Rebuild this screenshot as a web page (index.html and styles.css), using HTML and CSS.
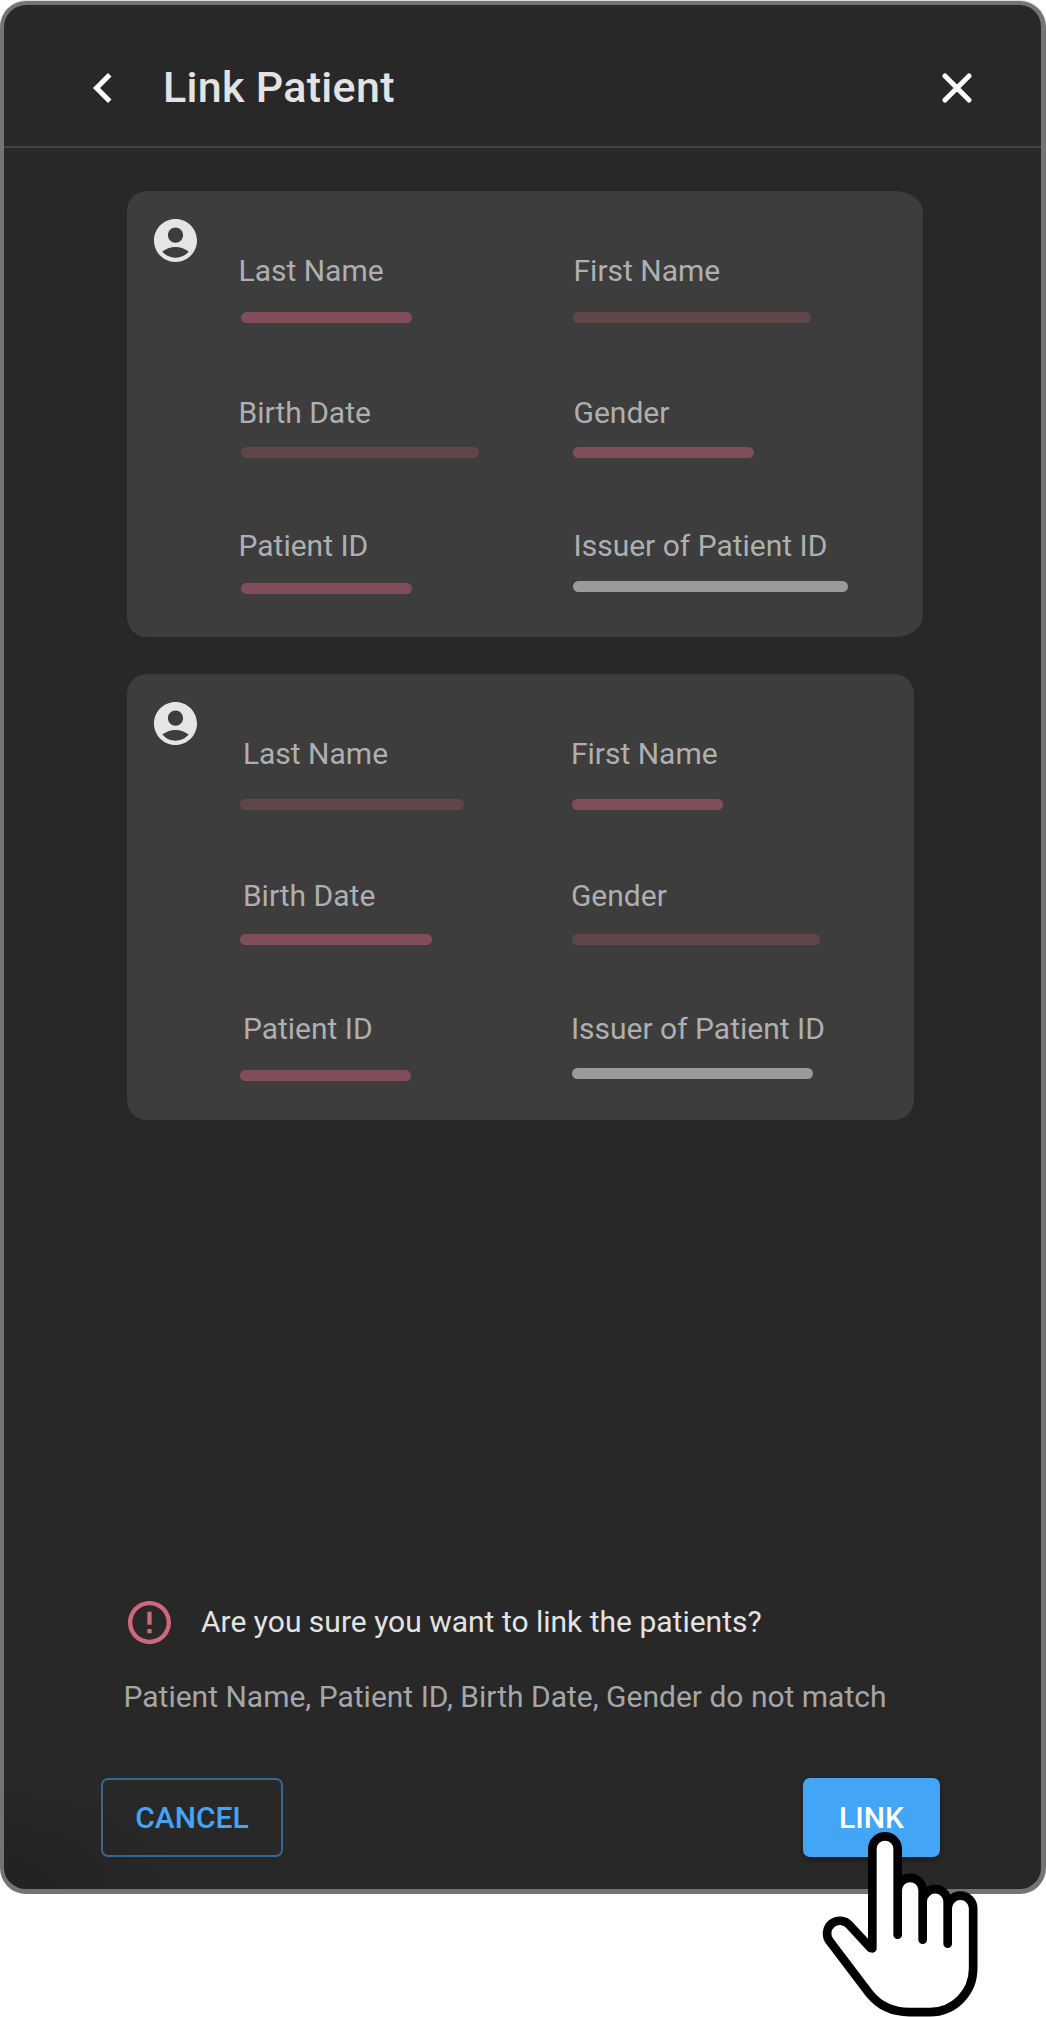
FILE: index.html
```html
<!DOCTYPE html>
<html lang="en">
<head>
<meta charset="utf-8">
<title>Link Patient</title>
<link rel="stylesheet" href="styles.css">
</head>
<body>
<main class="dialog">
  <header class="header">
    <svg class="back" viewBox="8 6 7.41 12"><path d="M15.41 7.41 14 6l-6 6 6 6 1.41-1.41L10.83 12z"/></svg>
    <h1 class="title">Link Patient</h1>
    <svg class="close" viewBox="0 0 30 30"><path d="M3 3l24 24M27 3L3 27"/></svg>
  </header>

  <section class="card card-source">
    <svg class="avatar" viewBox="2 2 20 20"><path d="M12 2C6.48 2 2 6.48 2 12s4.48 10 10 10 10-4.480 10-10S17.520 2 12 2zm0 4c1.930 0 3.500 1.570 3.500 3.500S13.930 13 12 13s-3.500-1.570-3.500-3.500S10.070 6 12 6zm0 14c-2.030 0-4.430-.82-6.140-2.880C7.550 15.800 9.680 15 12 15s4.450.8 6.140 2.120C16.430 19.180 14.030 20 12 20z"/></svg>
    <div class="fields">
      <div class="field"><span class="label">Last Name</span><i class="bar strong" style="width:171px"></i></div>
      <div class="field"><span class="label">First Name</span><i class="bar soft" style="width:238px"></i></div>
      <div class="field"><span class="label">Birth Date</span><i class="bar soft" style="width:238px"></i></div>
      <div class="field"><span class="label">Gender</span><i class="bar strong" style="width:181px"></i></div>
      <div class="field"><span class="label">Patient ID</span><i class="bar strong" style="width:171px"></i></div>
      <div class="field"><span class="label">Issuer of Patient ID</span><i class="bar plain" style="width:275px"></i></div>
    </div>
  </section>

  <section class="card card-target">
    <svg class="avatar" viewBox="2 2 20 20"><path d="M12 2C6.48 2 2 6.48 2 12s4.48 10 10 10 10-4.480 10-10S17.520 2 12 2zm0 4c1.930 0 3.500 1.570 3.500 3.500S13.930 13 12 13s-3.500-1.570-3.500-3.500S10.070 6 12 6zm0 14c-2.030 0-4.430-.82-6.140-2.880C7.550 15.800 9.680 15 12 15s4.450.8 6.140 2.120C16.430 19.180 14.030 20 12 20z"/></svg>
    <div class="fields">
      <div class="field"><span class="label">Last Name</span><i class="bar soft" style="width:223.500px"></i></div>
      <div class="field"><span class="label">First Name</span><i class="bar strong" style="width:150.500px"></i></div>
      <div class="field"><span class="label">Birth Date</span><i class="bar strong" style="width:191.500px"></i></div>
      <div class="field"><span class="label">Gender</span><i class="bar soft" style="width:247.500px"></i></div>
      <div class="field"><span class="label">Patient ID</span><i class="bar strong" style="width:170.500px"></i></div>
      <div class="field"><span class="label">Issuer of Patient ID</span><i class="bar plain" style="width:240.500px"></i></div>
    </div>
  </section>

  <footer class="footer">
    <div class="confirm">
      <svg class="alert" viewBox="2 2 20 20"><path d="M11 15h2v2h-2zm0-8h2v6h-2zm.99-5C6.470 2 2 6.480 2 12s4.470 10 9.990 10C17.520 22 22 17.520 22 12S17.520 2 11.990 2zM12 20c-4.420 0-8-3.580-8-8s3.580-8 8-8 8 3.580 8 8-3.580 8-8 8z"/></svg>
      <span class="question">Are you sure you want to link the patients?</span>
    </div>
    <p class="reason">Patient Name, Patient ID, Birth Date, Gender do not match</p>
    <div class="actions">
      <button class="btn cancel">CANCEL</button>
      <button class="btn link">LINK</button>
    </div>
  </footer>
</main>
<svg class="pointer" viewBox="120 240 480 561"><path d="M277 595V297a38 38 0 0 1 76 0V554V421a37.500 37.500 0 0 1 75 0V569V455a37.500 37.500 0 0 1 75 0V581V475a38 38 0 0 1 76.500 0V655C579.500 730 520 786.500 450 786.500H388C340 786 300 770 270 733L150 575A38 38 0 0 1 209 526L272 594Z"/></svg>
</body>
</html>
```

FILE: styles.css
```css
* { box-sizing: border-box; }

body {
  margin: 0;
  position: relative;
  height: 2017px;
  overflow: hidden;
  background: #fff;
  font-family: Roboto, "Liberation Sans", sans-serif;
}

.dialog {
  display: flex;
  flex-direction: column;
  height: 1893px;
  margin-top: 1px;
  border: 4px solid #747474;
  border-right-width: 5px;
  border-bottom-width: 5px;
  border-radius: 26px;
  background: radial-gradient(ellipse 180px 110px at 0 100%, #222 0, #282828 100%);
  box-shadow: 0 -1px 0 #dcdedd;
}

.header {
  display: flex;
  flex: none;
  align-items: center;
  height: 143px;
  padding: 49px 69px 24px 89px;
  border-bottom: 2px solid #434343;
}
.back { width: 18.5px; height: 30px; fill: #fff; }
.title {
  margin: 0 auto 2px 51.5px;
  font-size: 43px;
  line-height: 52px;
  font-weight: 500;
  letter-spacing: 0.3px;
  color: #e3e3e3;
}
.close { width: 30px; height: 30px; fill: none; stroke: #fff; stroke-width: 5; stroke-linecap: round; }

.card {
  display: flex;
  flex: none;
  height: 446px;
  margin-left: 123px;
  padding: 28px 0 0 27px;
  background: #3d3d3d;
}
.card-source {
  width: 796px;
  margin-top: 43px;
  border-radius: 20px 28px 28px 20px / 20px 22px 22px 20px;
}
.card-target { width: 787px; margin-top: 37px; border-radius: 20px; }

.avatar { flex: none; width: 43px; height: 43px; fill: #e5e5e5; }

.fields {
  display: grid;
  grid-template-columns: 332px auto;
  grid-template-rows: 142px 133px auto;
  padding-top: 34px;
  margin-left: 44px;
}
.card-target .fields { margin-left: 43.4px; }

.field { display: flex; flex-direction: column; }
.label {
  font-size: 30px;
  line-height: 36px;
  color: #afafaf;
  margin-left: -2.5px;
}
.card-target .label { margin-left: 2.5px; }
.card-source .field:nth-child(even) .label { margin-left: 0.5px; }
.card-target .field:nth-child(even) .label { margin-left: -1.5px; }

.bar { height: 11px; border-radius: 6px; margin-top: 23px; }
.field:nth-child(3) .bar, .field:nth-child(4) .bar { margin-top: 16px; }
.field:nth-child(5) .bar { margin-top: 19px; }
.field:nth-child(6) .bar { margin-top: 17px; }
.card-target .bar { margin-top: 27px; }
.card-target .field:nth-child(3) .bar, .card-target .field:nth-child(4) .bar { margin-top: 20px; }
.card-target .field:nth-child(5) .bar { margin-top: 23px; }
.card-target .field:nth-child(6) .bar { margin-top: 21px; }
.strong { background: #814d58; }
.soft { background: #5f4649; }
.plain { background: #9a9a9a; }

.footer { margin-top: auto; padding: 0 101px 32px 97px; }
.confirm { display: flex; align-items: center; gap: 30px; margin-left: 27px; }
.alert { width: 43px; height: 43px; fill: #d1677b; }
.question { margin-bottom: 2px; font-size: 30px; line-height: 36px; color: #e3e3e3; }
.reason {
  margin: 35px 0 63px 22.5px;
  font-size: 30px;
  line-height: 36px;
  color: #a6a6a6;
  white-space: nowrap;
}
.actions { display: flex; justify-content: space-between; }
.btn {
  height: 79px;
  padding: 0;
  border: 0;
  border-radius: 7px;
  font: 500 30px/36px Roboto, "Liberation Sans", sans-serif;
}
.cancel { width: 182px; color: #42a5f5; background: transparent; border: 2px solid #366694; }
.link { width: 137px; color: #fff; background: #42a5f5; box-shadow: 0 3px 6px rgba(0, 0, 0, 0.35); }

.pointer {
  position: absolute;
  left: 820px;
  top: 1830px;
  width: 160px;
  height: 187px;
  fill: #fff;
  stroke: #000;
  stroke-width: 26;
  stroke-linejoin: round;
  stroke-linecap: round;
}
```
